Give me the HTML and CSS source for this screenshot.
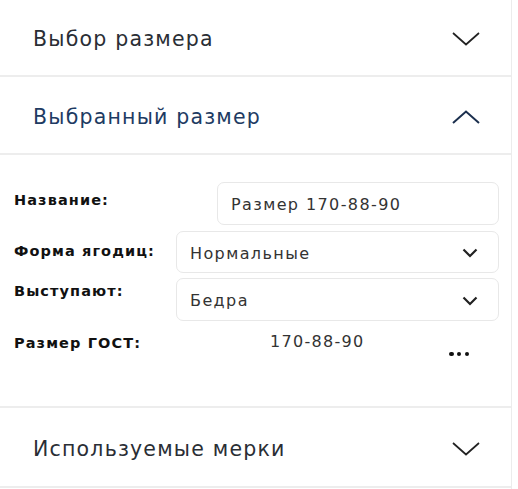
FILE: index.html
```html
<!DOCTYPE html>
<html lang="ru">
<head>
<meta charset="utf-8">
<link rel="stylesheet" href="styles.css">
</head>
<body>
<div class="panel">
  <div class="acc-head">
    <span class="acc-title">Выбор размера</span>
    <svg class="chev" width="28" height="14" viewBox="0 0 28 14"><path d="M1 1 L14 12.5 L27 1" fill="none" stroke="#222" stroke-width="1.7"/></svg>
  </div>
  <div class="acc-head acc-head--open">
    <span class="acc-title acc-title--active">Выбранный размер</span>
    <svg class="chev" width="28" height="14" viewBox="0 0 28 14"><path d="M1 13 L14 1.5 L27 13" fill="none" stroke="#1b2f4e" stroke-width="2"/></svg>
  </div>
  <div class="acc-body">
    <div class="row row--name">
      <div class="label label--name">Название:</div>
      <div class="control control--name">Размер 170-88-90</div>
    </div>
    <div class="row row--shape">
      <div class="label label--shape">Форма ягодиц:</div>
      <div class="control control--select">
        <span>Нормальные</span>
        <svg width="16" height="10" viewBox="0 0 16 10"><path d="M1.5 1.5 L8 8 L14.5 1.5" fill="none" stroke="#222" stroke-width="2.2"/></svg>
      </div>
    </div>
    <div class="row row--protrude">
      <div class="label label--protrude">Выступают:</div>
      <div class="control control--select">
        <span>Бедра</span>
        <svg width="16" height="10" viewBox="0 0 16 10"><path d="M1.5 1.5 L8 8 L14.5 1.5" fill="none" stroke="#222" stroke-width="2.2"/></svg>
      </div>
    </div>
    <div class="row row--gost">
      <div class="label label--gost">Размер ГОСТ:</div>
      <div class="gost-value">170-88-90</div>
      <button class="more" type="button" aria-label="Ещё"><i></i><i></i><i></i></button>
    </div>
  </div>
  <div class="acc-head acc-head--last">
    <span class="acc-title">Используемые мерки</span>
    <svg class="chev" width="28" height="14" viewBox="0 0 28 14"><path d="M1 1 L14 12.5 L27 1" fill="none" stroke="#222" stroke-width="1.7"/></svg>
  </div>
</div>
</body>
</html>
```

FILE: styles.css
```css
* { box-sizing: border-box; }
html, body { margin: 0; padding: 0; background: #fff; }
body { font-family: "DejaVu Sans", sans-serif; color: #222; }

.panel {
  width: 512px;
  min-height: 489px;
  border-right: 1px solid #ececec;
}

.acc-head {
  height: 77px;
  border-bottom: 2px solid #ededed;
  display: flex;
  align-items: center;
  justify-content: space-between;
  padding: 3px 31px 0 33px;
}
.acc-title {
  font-size: 20.5px;
  letter-spacing: 1.2px;
  color: #2a2e35;
}
.acc-title--active { color: #1e3b63; }
.acc-head--open { height: 78px; padding-top: 3px; }
.acc-head--last { height: 80px; padding-top: 3px; }

.acc-body {
  height: 253px;
  border-bottom: 2px solid #ededed;
  padding: 27px 12px 0 14px;
}

.row { display: flex; align-items: flex-start; }
.row--shape { margin-top: 6px; }
.row--protrude { margin-top: 5px; }
.row--gost { margin-top: 11px; }

.label {
  width: 162px;
  font-size: 14.5px;
  font-weight: bold;
  letter-spacing: 1.1px;
  line-height: 16px;
  color: #111;
}
.label--name { padding-top: 10px; }
.label--shape { padding-top: 12px; }
.label--protrude { padding-top: 5px; }
.label--gost { padding-top: 3px; width: 256px; }

.control {
  flex: 1;
  height: 43px;
  border: 1px solid #e8e8e8;
  border-radius: 7px;
  font-size: 16px;
  letter-spacing: 1.4px;
  color: #333;
  display: flex;
  align-items: center;
  padding: 2px 14px 0 13px;
}
.control--name { margin-left: 41px; }
.control--select { justify-content: space-between; height: 42px; padding-right: 20px; }
.row--protrude .control--select { height: 43px; }

.gost-value {
  font-size: 16px;
  letter-spacing: 1.3px;
  color: #333;
  line-height: 20px;
}
.more {
  margin: 19px 30px 0 auto;
  border: 0;
  background: none;
  padding: 0;
  width: 20px;
  height: 6px;
  display: flex;
  justify-content: space-between;
  align-items: center;
}
.more i {
  display: block;
  width: 4.5px;
  height: 4.5px;
  border-radius: 50%;
  background: #111;
}
```
